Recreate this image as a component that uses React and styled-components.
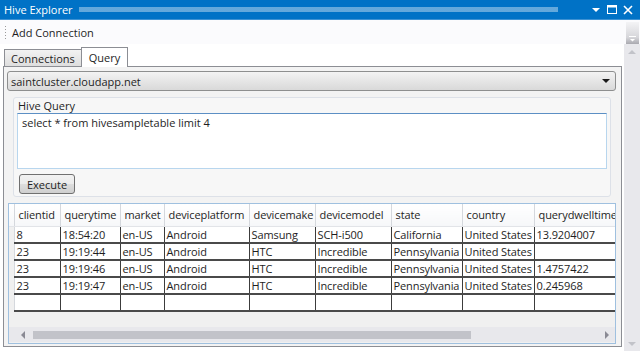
import React from "react";
import styled, { createGlobalStyle } from "styled-components";

const GlobalStyle = createGlobalStyle`
  html, body {
    margin: 0;
    padding: 0;
    background: #ffffff;
  }
  body {
    font-family: "Open Sans", "Noto Sans", sans-serif;
    font-size: 11px;
    color: #1e1e1e;
  }
`;

const Window = styled.div`
  width: 640px;
  height: 351px;
  display: flex;
  flex-direction: column;
  overflow: hidden;
  background: #ffffff;
`;

const TitleBar = styled.div`
  height: 19px;
  flex: none;
  display: flex;
  align-items: center;
  background: #0072c6;
  border-bottom: 1px solid #3e92d3;
  color: #ffffff;
  padding: 0 4px 0 4px;
`;

const Title = styled.span`
  font-size: 11px;
  line-height: 19px;
  margin-top: -1px;
`;

const Dots = styled.span`
  flex: 1;
  height: 5px;
  margin: 0 30px 0 6px;
  background-image: radial-gradient(circle, rgba(255, 255, 255, 0.4) 0.7px, transparent 1px);
  background-size: 2px 2px;
`;

const TitleButton = styled.span`
  width: 16px;
  height: 16px;
  display: flex;
  align-items: center;
  justify-content: center;
`;

const Toolbar = styled.div`
  height: 24px;
  flex: none;
  display: flex;
  align-items: center;
  background: #fbfbfd;
`;

const Gripper = styled.span`
  width: 3px;
  height: 14px;
  margin: 0 5px 0 4px;
  background-image: radial-gradient(circle, #9a9a9a 0.8px, transparent 1px);
  background-size: 3px 3px;
`;

const ToolLabel = styled.span`
  flex: 1;
  font-size: 11px;
`;

const Overflow = styled.span`
  width: 13px;
  height: 22px;
  margin-right: 1px;
  align-self: flex-end;
  background: linear-gradient(#f4f4f6, #d6d6da 70%, #a9a9b0);
  display: flex;
  align-items: flex-end;
  justify-content: center;
  padding-bottom: 2px;
  box-sizing: border-box;
`;

const Lower = styled.div`
  flex: 1;
  display: flex;
  min-height: 0;
`;

const Content = styled.div`
  flex: 1;
  display: flex;
  flex-direction: column;
  padding: 2px 2px 4px 3px;
  min-width: 0;
`;

const VScroll = styled.div`
  width: 16px;
  flex: none;
  background: #e8e8ec;
  display: flex;
  flex-direction: column;
  justify-content: space-between;
  align-items: center;
  padding: 6px 0 5px;
  box-sizing: border-box;
`;

const Tabs = styled.div`
  display: flex;
  align-items: flex-end;
  height: 20px;
  padding-left: 1px;
`;

const Tab = styled.div`
  height: ${(p) => (p.$active ? "20px" : "17px")};
  box-sizing: border-box;
  padding: 0 ${(p) => (p.$active ? "7px" : "6px")};
  display: flex;
  align-items: center;
  border: 1px solid #8c8e94;
  border-bottom: none;
  margin-right: ${(p) => (p.$active ? "0" : "-1px")};
  margin-bottom: ${(p) => (p.$active ? "-1px" : "0")};
  background: ${(p) => (p.$active ? "#ffffff" : "linear-gradient(#f2f2f2, #dedede)")};
  position: relative;
  z-index: ${(p) => (p.$active ? 1 : 0)};
  font-size: 11px;
`;

const Panel = styled.div`
  flex: 1;
  border: 1px solid #8c8e94;
  background: #f3f3f3;
  padding: 4px 4px 2px 3px;
  display: flex;
  flex-direction: column;
  min-height: 0;
`;

const Combo = styled.div`
  height: 20px;
  box-sizing: border-box;
  border: 1px solid #8e8f8f;
  border-radius: 3px;
  background: linear-gradient(#f3f3f3, #e6e6e6 50%, #d9d9d9);
  display: flex;
  align-items: center;
  padding: 0 5px 0 3px;
  margin-right: 1px;
`;

const ComboText = styled.span`
  flex: 1;
`;

const Group = styled.div`
  margin: 6px 6px 0 6px;
  height: 100px;
  box-sizing: border-box;
  border: 1px solid #dde1e8;
  border-radius: 3px;
  background: #f7f7f7;
  padding: 2px 3px 0 3px;
  display: flex;
  flex-direction: column;
`;

const GroupLabel = styled.span`
  line-height: 12px;
  height: 12px;
  margin-left: 1px;
`;

const QueryBox = styled.div`
  height: 56px;
  box-sizing: border-box;
  margin-top: 1px;
  background: #ffffff;
  border: 1px solid #b8d6ee;
  border-top-color: #5c8fc4;
  padding: 1px 4px;
`;

const Button = styled.div`
  width: 56px;
  height: 20px;
  box-sizing: border-box;
  margin: 5px 0 0 2px;
  border: 1px solid #707070;
  border-radius: 3px;
  background: linear-gradient(#f2f2f2, #ebebeb 50%, #dddddd 51%, #cfcfcf);
  display: flex;
  align-items: center;
  justify-content: center;
`;

const Grid = styled.div`
  flex: 1;
  margin: 6px 1px 0 1px;
  border: 1px solid #9fc0df;
  background: #f0f0f0;
  display: flex;
  flex-direction: column;
  min-height: 0;
  overflow: hidden;
`;

const Viewport = styled.div`
  flex: 1;
  overflow: hidden;
`;

const Table = styled.table`
  border-collapse: collapse;
  table-layout: fixed;
  width: 608px;
  font-size: 11px;
  letter-spacing: -0.1px;
`;

const HeadCell = styled.th`
  height: 22px;
  box-sizing: border-box;
  padding: 0 0 0 ${(p) => (p.$corner ? "0" : "4px")};
  text-align: left;
  font-weight: normal;
  white-space: nowrap;
  overflow: hidden;
  background: linear-gradient(#ffffff, #f6f7f9);
  border-right: 1px solid #d5d8dd;
  border-bottom: 1px solid #e2e4e8;
`;

const RowHead = styled.td`
  background: #f0f0f0;
  border-right: 1px solid #d5d8dd;
  padding: 0;
`;

const Cell = styled.td`
  height: 15px;
  padding: 0 0 0 2px;
  line-height: 15px;
  white-space: nowrap;
  overflow: hidden;
  background: #ffffff;
  border-right: 1px solid #3c3c3c;
  border-bottom: 2px solid #4a4a4a;
`;

const HScroll = styled.div`
  height: 15px;
  flex: none;
  margin-bottom: 1px;
  background: #e8e8ec;
  display: flex;
  align-items: center;
  padding: 0 6px 0 12px;
`;

const Thumb = styled.div`
  width: 438px;
  height: 8px;
  margin-left: 8px;
  background: #c2c3c9;
`;

const Spacer = styled.div`
  flex: 1;
`;

const columns = [
  { name: "clientid", width: 46 },
  { name: "querytime", width: 60 },
  { name: "market", width: 44 },
  { name: "deviceplatform", width: 85 },
  { name: "devicemake", width: 66 },
  { name: "devicemodel", width: 76 },
  { name: "state", width: 71 },
  { name: "country", width: 72 },
  { name: "querydwelltime", width: 83 },
];

const rows = [
  ["8", "18:54:20", "en-US", "Android", "Samsung", "SCH-i500", "California", "United States", "13.9204007"],
  ["23", "19:19:44", "en-US", "Android", "HTC", "Incredible", "Pennsylvania", "United States", ""],
  ["23", "19:19:46", "en-US", "Android", "HTC", "Incredible", "Pennsylvania", "United States", "1.4757422"],
  ["23", "19:19:47", "en-US", "Android", "HTC", "Incredible", "Pennsylvania", "United States", "0.245968"],
  ["", "", "", "", "", "", "", "", ""],
];

const Tri = ({ dir, color, size = 4 }) => {
  const s = size;
  const pts = {
    down: `0,0 ${2 * s},0 ${s},${s}`,
    up: `0,${s} ${2 * s},${s} ${s},0`,
    left: `${s},0 ${s},${2 * s} 0,${s}`,
    right: `0,0 0,${2 * s} ${s},${s}`,
  }[dir];
  const w = dir === "left" || dir === "right" ? s : 2 * s;
  const h = dir === "left" || dir === "right" ? 2 * s : s;
  return (
    <svg width={w} height={h} viewBox={`0 0 ${w} ${h}`}>
      <polygon points={pts} fill={color} />
    </svg>
  );
};

export default function App() {
  return (
    <>
      <GlobalStyle />
      <Window>
        <TitleBar>
          <Title>Hive Explorer</Title>
          <Dots />
          <TitleButton>
            <Tri dir="down" color="#ffffff" size={4} />
          </TitleButton>
          <TitleButton>
            <svg width="10" height="9" viewBox="0 0 10 9">
              <rect x="0.5" y="0.5" width="9" height="8" fill="none" stroke="#fff" />
              <rect x="0" y="0" width="10" height="2.5" fill="#fff" />
            </svg>
          </TitleButton>
          <TitleButton>
            <svg width="10" height="10" viewBox="0 0 10 10">
              <path d="M1 1 L9 9 M9 1 L1 9" stroke="#fff" strokeWidth="1.6" />
            </svg>
          </TitleButton>
        </TitleBar>
        <Toolbar>
          <Gripper />
          <ToolLabel>Add Connection</ToolLabel>
          <Overflow>
            <svg width="7" height="6" viewBox="0 0 7 6">
              <rect x="0" y="0" width="7" height="1" fill="#ffffff" />
              <polygon points="1,3 6,3 3.5,5.5" fill="#ffffff" />
            </svg>
          </Overflow>
        </Toolbar>
        <Lower>
          <Content>
            <Tabs>
              <Tab>Connections</Tab>
              <Tab $active>Query</Tab>
            </Tabs>
            <Panel>
              <Combo>
                <ComboText>saintcluster.cloudapp.net</ComboText>
                <Tri dir="down" color="#1a1a1a" size={4} />
              </Combo>
              <Group>
                <GroupLabel>Hive Query</GroupLabel>
                <QueryBox>select * from hivesampletable limit 4</QueryBox>
                <Button>Execute</Button>
              </Group>
              <Grid>
                <Viewport>
                  <Table>
                    <colgroup>
                      <col style={{ width: 5 }} />
                      {columns.map((c) => (
                        <col key={c.name} style={{ width: c.width }} />
                      ))}
                    </colgroup>
                    <thead>
                      <tr>
                        <HeadCell $corner />
                        {columns.map((c) => (
                          <HeadCell key={c.name}>{c.name}</HeadCell>
                        ))}
                      </tr>
                    </thead>
                    <tbody>
                      {rows.map((r, i) => (
                        <tr key={i}>
                          <RowHead />
                          {r.map((v, j) => (
                            <Cell key={j}>{v}</Cell>
                          ))}
                        </tr>
                      ))}
                    </tbody>
                  </Table>
                </Viewport>
                <HScroll>
                  <Tri dir="left" color="#8a8a94" size={4} />
                  <Thumb />
                  <Spacer />
                  <Tri dir="right" color="#8a8a94" size={4} />
                </HScroll>
              </Grid>
            </Panel>
          </Content>
          <VScroll>
            <Tri dir="up" color="#c2c3c9" size={4} />
            <Tri dir="down" color="#c2c3c9" size={4} />
          </VScroll>
        </Lower>
      </Window>
    </>
  );
}
